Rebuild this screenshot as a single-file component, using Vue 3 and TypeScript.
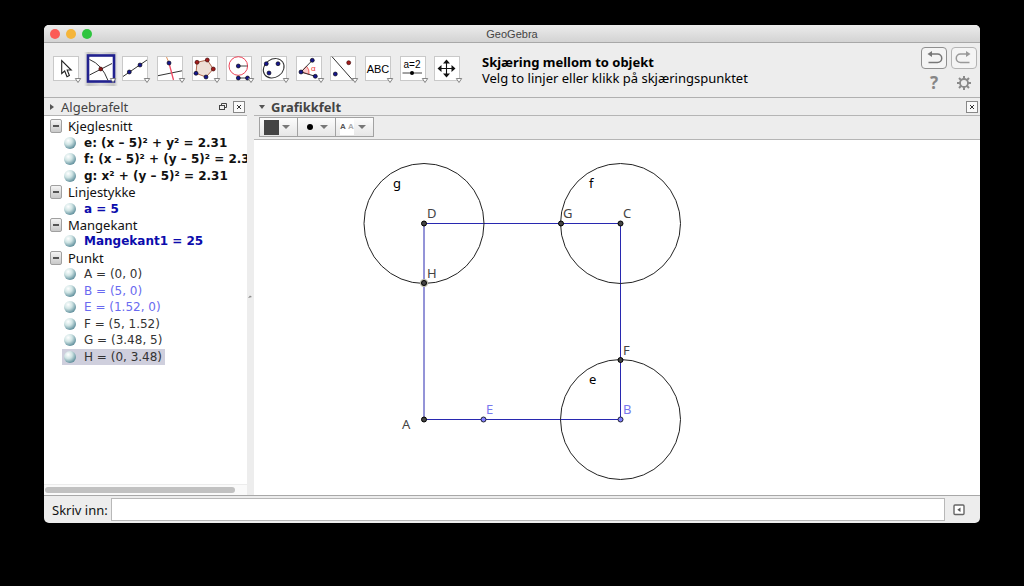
<script setup lang="ts">
import { ref } from 'vue'

type Tone = 'black' | 'blue' | 'soft' | 'dark'
interface Item { text: string; tone: Tone; selected?: boolean }
interface Group { name: string; items: Item[] }
interface Mark { name: string; x: number; y: number; lx: number; ly: number; free?: boolean; selected?: boolean }

const groups: Group[] = [
  {
    name: 'Kjeglesnitt',
    items: [
      { text: 'e: (x – 5)² + y² = 2.31', tone: 'black' },
      { text: 'f: (x – 5)² + (y – 5)² = 2.31', tone: 'black' },
      { text: 'g: x² + (y – 5)² = 2.31', tone: 'black' },
    ],
  },
  { name: 'Linjestykke', items: [{ text: 'a = 5', tone: 'blue' }] },
  { name: 'Mangekant', items: [{ text: 'Mangekant1 = 25', tone: 'blue' }] },
  {
    name: 'Punkt',
    items: [
      { text: 'A = (0, 0)', tone: 'dark' },
      { text: 'B = (5, 0)', tone: 'soft' },
      { text: 'E = (1.52, 0)', tone: 'soft' },
      { text: 'F = (5, 1.52)', tone: 'dark' },
      { text: 'G = (3.48, 5)', tone: 'dark' },
      { text: 'H = (0, 3.48)', tone: 'dark', selected: true },
    ],
  },
]

const tools = ['move', 'intersect', 'line', 'perpendicular', 'polygon', 'circle', 'ellipse', 'angle', 'reflect', 'text', 'slider', 'pan']
const active = ref('intersect')
const command = ref('')

const circles = [
  { name: 'g', x: 170, y: 83.5, lx: 139, ly: 48 },
  { name: 'f', x: 366.5, y: 83.5, lx: 335, ly: 48 },
  { name: 'e', x: 366.5, y: 279.5, lx: 335, ly: 244 },
]

const marks: Mark[] = [
  { name: 'D', x: 170, y: 83.5, lx: 173, ly: 78 },
  { name: 'G', x: 307, y: 83.5, lx: 309, ly: 78 },
  { name: 'C', x: 366.5, y: 83.5, lx: 369, ly: 78 },
  { name: 'H', x: 170, y: 143, lx: 173, ly: 138, selected: true },
  { name: 'F', x: 366.5, y: 220, lx: 369, ly: 215 },
  { name: 'A', x: 170, y: 279.5, lx: 148, ly: 289 },
  { name: 'E', x: 229.5, y: 279.5, lx: 232, ly: 274, free: true },
  { name: 'B', x: 366.5, y: 279.5, lx: 369, ly: 274, free: true },
]
</script>

<template>
  <div class="desktop">
    <main class="window">
      <header class="titlebar">
        <div class="lights">
          <button class="light red" aria-label="Lukk"></button>
          <button class="light yellow" aria-label="Minimer"></button>
          <button class="light green" aria-label="Zoom"></button>
        </div>
        <h1>GeoGebra</h1>
      </header>

      <div class="toolbar">
        <div class="tools">
          <button v-for="t in tools" :key="t" class="tool" :class="{ active: t === active }" :aria-label="t" @click="active = t">
            <svg viewBox="0 0 34 34" width="34" height="34">
              <rect x="4.5" y="4.5" width="25" height="24" fill="#fff" stroke="#c9c9c9" />
              <rect v-if="t === active" x="4" y="3.5" width="26" height="26" fill="#fff" stroke="#21218f" stroke-width="2.6" />
              <path v-if="t === 'move'" d="M12.7 8.5V21.5L15.7 19L18 24.8L20.4 23.6L18.2 18H22.2Z" fill="#fff" stroke="#222" stroke-width="1.1" />
              <g v-else-if="t === 'intersect'" fill="none" stroke="#333">
                <path d="M5.5 7.5Q18 12.500 24 28.500M5.500 23L28 11.500" />
                <circle cx="16.700" cy="17" r="1.900" fill="#8b1a1a" stroke="#300" stroke-width=".6" />
              </g>
              <g v-else-if="t === 'line'" stroke="#333">
                <path d="M5 24.500L29 8" />
                <circle cx="11.300" cy="20" r="2" class="bp" /><circle cx="22" cy="13" r="2" class="bp" />
              </g>
              <g v-else-if="t === 'perpendicular'" stroke="#333">
                <path d="M5 23.700L29 18.800" />
                <path d="M13.500 5L16 11" stroke="#e0925c" /><path d="M16 11L20.500 28" stroke="#f04a63" stroke-width="1.300" />
                <circle cx="16" cy="11" r="2" class="bp" />
              </g>
              <g v-else-if="t === 'polygon'">
                <path d="M9 10.300L19.300 8L25.300 17L18 25L8 21.300Z" fill="#eedfd6" stroke="#b06a50" />
                <g class="rp"><circle cx="9" cy="10.300" r="2" /><circle cx="19.300" cy="8" r="2" /><circle cx="25.300" cy="17" r="2" /></g>
                <g class="bp"><circle cx="18" cy="25" r="2" /><circle cx="8" cy="21.300" r="2" /></g>
              </g>
              <g v-else-if="t === 'circle'">
                <circle cx="16.300" cy="14" r="9.300" fill="none" stroke="#ec4458" />
                <path d="M16.300 14H25.500M16.300 26H25.700" stroke="#444" />
                <g class="bp"><circle cx="16.300" cy="14" r="2" /><circle cx="16.300" cy="26" r="2" /><circle cx="25.500" cy="26" r="2" /></g>
              </g>
              <g v-else-if="t === 'ellipse'">
                <ellipse cx="16.700" cy="16.300" rx="11" ry="9" transform="rotate(-35 16.700 16.300)" fill="none" stroke="#333" />
                <g class="bp"><circle cx="9.300" cy="11.700" r="2" /><circle cx="21" cy="11.700" r="2" /><circle cx="12" cy="21" r="2" /></g>
              </g>
              <g v-else-if="t === 'angle'">
                <path d="M9 20L14.500 14.200Q17.800 17.500 17 22.200Z" fill="#fbc9c9" stroke="#e44" stroke-width=".8" />
                <path d="M20.300 8.300L9 20L23.300 24.300" fill="none" stroke="#333" />
                <g class="bp"><circle cx="9" cy="20" r="2" /><circle cx="20.300" cy="8.300" r="2" /><circle cx="23.300" cy="24.300" r="2" /></g>
                <text x="19" y="19" class="alpha">α</text>
              </g>
              <g v-else-if="t === 'reflect'">
                <path d="M6 4.700L27 28.500" stroke="#333" />
                <circle cx="22.700" cy="10.700" r="2" class="rp" /><circle cx="9.300" cy="22" r="2" class="bp" />
              </g>
              <text v-else-if="t === 'text'" x="17" y="21" class="abc">ABC</text>
              <g v-else-if="t === 'slider'">
                <text x="16" y="16" class="var">a=2</text>
                <path d="M6.500 21H26" stroke="#444" /><circle cx="16" cy="21" r="2" />
              </g>
              <g v-else-if="t === 'pan'">
                <path d="M9 16.500H24M16.500 9V24" stroke="#111" stroke-width="1.100" />
                <path d="M16.500 7.500L20 11.500H13ZM16.500 25.500L20 21.500H13ZM7.500 16.500L11.500 13V20ZM25.500 16.500L21.500 13V20Z" fill="#111" />
              </g>
              <path d="M26.300 26.500H31.700L29 30.500Z" fill="#fff" stroke="#777" stroke-width=".9" />
            </svg>
          </button>
        </div>
        <p class="help"><strong>Skjæring mellom to objekt</strong><span>Velg to linjer eller klikk på skjæringspunktet</span></p>
        <div class="actions">
          <button class="history" aria-label="Angre">
            <svg viewBox="0 0 24 20" width="24" height="20"><path d="M8 6H15.500A4.200 4.200 0 0 1 15.500 14.500H6.500" fill="none" stroke="#777" stroke-width="1.500" /><path d="M5.500 6L10 3V9Z" fill="#777" /></svg>
          </button>
          <button class="history off" aria-label="Gjør om">
            <svg viewBox="0 0 24 20" width="24" height="20"><path d="M16 6H8.500A4.200 4.200 0 0 0 8.500 14.500H17.500" fill="none" stroke="#999" stroke-width="1.500" /><path d="M18.500 6L14 3V9Z" fill="#999" /></svg>
          </button>
          <button class="plain question" aria-label="Hjelp">?</button>
          <button class="plain" aria-label="Innstillinger">
            <svg viewBox="0 0 16 16" width="16" height="16" fill="none" stroke="#8a8a8a">
              <circle cx="8" cy="8" r="4" stroke-width="1.800" />
              <path d="M8 1V4M8 12V15M1 8H4M12 8H15M3 3L5.200 5.200M10.800 10.800L13 13M3 13L5.200 10.800M10.800 5.200L13 3" stroke-width="2" />
            </svg>
          </button>
        </div>
      </div>

      <div class="panes">
        <section class="algebra">
          <div class="dock">
            <svg viewBox="0 0 8 8" width="8" height="8"><path d="M2 1L6 4L2 7Z" fill="#555" /></svg>
            <h2>Algebrafelt</h2>
            <button class="detach" aria-label="Løsne">
              <svg viewBox="0 0 10 10" width="10" height="10" fill="none" stroke="#444"><path d="M3.500 3V1.500H8.500V5.500H7" /><rect x="1.500" y="3.500" width="5" height="4" /></svg>
            </button>
            <button class="close" aria-label="Lukk algebrafelt"><svg viewBox="0 0 10 10" width="10" height="10"><path d="M3 3L7 7M7 3L3 7" stroke="#333" /></svg></button>
          </div>
          <div class="tree">
            <template v-for="g in groups" :key="g.name">
              <div class="group"><button class="toggle" :aria-label="'Skjul ' + g.name"></button><span>{{ g.name }}</span></div>
              <div v-for="i in g.items" :key="i.text" class="item" :class="[i.tone, { selected: i.selected }]">
                <button class="ball" :aria-label="'Vis ' + i.text"></button><span>{{ i.text }}</span>
              </div>
            </template>
          </div>
          <div class="scroll"><div class="thumb"></div></div>
        </section>

        <div class="divider"><svg viewBox="0 0 6 6" width="6" height="6"><path d="M1 4L3 1.500L5 3Z" fill="#888" /></svg></div>

        <section class="graphics">
          <div class="dock strong">
            <svg viewBox="0 0 8 8" width="8" height="8"><path d="M1 2H7L4 6Z" fill="#555" /></svg>
            <h2>Grafikkfelt</h2>
            <button class="close" aria-label="Lukk grafikkfelt"><svg viewBox="0 0 10 10" width="10" height="10"><path d="M3 3L7 7M7 3L3 7" stroke="#333" /></svg></button>
          </div>
          <div class="stylebar">
            <button aria-label="Farge"><i class="swatch"></i><i class="caret"></i></button>
            <button aria-label="Punktstil"><i class="dot"></i><i class="caret"></i></button>
            <button aria-label="Tekststil" class="letters"><span><b>A</b> <em>A</em></span><i class="caret"></i></button>
          </div>
          <svg class="canvas">
            <path d="M170 279.500V83.500H366.500V279.500Z" fill="none" stroke="#2828b0" />
            <g v-for="c in circles" :key="c.name">
              <circle :cx="c.x" :cy="c.y" r="60" fill="none" stroke="#222" />
              <text :x="c.lx" :y="c.ly" class="curve">{{ c.name }}</text>
            </g>
            <g v-for="m in marks" :key="m.name" :class="{ free: m.free }">
              <circle v-if="m.selected" :cx="m.x" :cy="m.y" r="4" fill="#b9b9a8" />
              <circle :cx="m.x" :cy="m.y" r="2.500" class="mark" />
              <text :x="m.lx" :y="m.ly" class="label">{{ m.name }}</text>
            </g>
          </svg>
        </section>
      </div>

      <footer class="inputbar">
        <label for="command">Skriv inn:</label>
        <input id="command" v-model="command" type="text" />
        <button class="plain" aria-label="Inntastingshjelp">
          <svg viewBox="0 0 12 12" width="12" height="12"><rect x="1" y="1" width="10" height="9.500" rx="1" fill="#fff" stroke="#666" stroke-width="1.400" /><path d="M7.500 3.500V8L4.300 5.700Z" fill="#555" /></svg>
        </button>
      </footer>
    </main>
  </div>
</template>

<style>
html, body { background: #000; }
body { margin: 0; }
</style>

<style scoped>
.desktop {
  box-sizing: border-box;
  min-height: 100vh;
  padding: 25px 44px 63px;
  display: flex;
  background: #000;
  color: #111;
  font: 13px/16px "Noto Sans", sans-serif;
}
h1, h2, p { margin: 0; font-weight: normal; }
button { margin: 0; padding: 0; border: 0; background: none; font: inherit; color: inherit; }
svg { display: block; }
.window { flex: 1; min-width: 0; display: flex; flex-direction: column; border-radius: 5px; overflow: hidden; background: #ededed; }
.titlebar { height: 17px; display: grid; grid-template-columns: 1fr auto 1fr; align-items: center; background: linear-gradient(#ececec, #d3d3d3); border-bottom: 1px solid #a8a8a8; }
.titlebar h1 { font: 11px/16px "Liberation Sans", Arial, sans-serif; color: #444; }
.lights { display: flex; gap: 6px; padding-left: 6px; }
.light { width: 10px; height: 10px; border-radius: 50%; }
.red { background: #fc5b57; }
.yellow { background: #f5b53a; }
.green { background: #2fc53f; }

.toolbar { height: 54px; display: flex; align-items: center; border-bottom: 1px solid #b0b0b0; }
.tools { width: 416px; margin: 0 0 2px 5px; display: grid; grid-template-columns: repeat(12, 1fr); flex: none; }
.tool.active { background: linear-gradient(90deg, #ededed, #c4c4c4 12%, #dcdcdc 50%, #c4c4c4 88%, #ededed); }
.bp { fill: #16168c; stroke: #000; stroke-width: .6px; }
.rp { fill: #a01c1c; stroke: #300; stroke-width: .6px; }
.abc, .var { font: 11px "Liberation Sans", Arial, sans-serif; text-anchor: middle; }
.var { font-size: 10px; }
.alpha { font: 8px "Liberation Sans", Arial, sans-serif; fill: #e33; }
.help { flex: 1; margin-left: 17px; display: flex; flex-direction: column; white-space: nowrap; color: #000; }
.actions { display: grid; grid-template-columns: 26px 26px; grid-template-rows: 22px 20px; gap: 4px; padding: 0 3px 0 0; justify-items: center; align-items: center; }
.history { box-sizing: border-box; width: 26px; height: 22px; border: 1px solid #8f8f8f; border-radius: 4px; background: #f4f4f4; }
.history.off { border-color: #b4b4b4; }
.question { font: bold 17px/20px "Noto Sans", sans-serif; color: #868686; }

.panes { flex: 1; display: grid; grid-template-columns: 203px 7px 1fr; min-height: 0; }
.algebra, .graphics { display: flex; flex-direction: column; min-width: 0; background: #fff; }
.dock { height: 17px; display: flex; align-items: center; gap: 5px; padding: 0 2px 0 4px; background: #ededed; border-bottom: 1px solid #b5b5b5; }
.dock h2 { flex: 1; font: 13px/16px "Noto Sans", sans-serif; color: #444; }
.dock.strong h2 { font-weight: bold; }
.close { box-sizing: border-box; width: 12px; height: 12px; border: 1px solid #888; background: #fafafa; }
.tree { flex: none; height: 247px; padding-top: 2px; display: grid; grid-auto-rows: 1fr; overflow: hidden; white-space: nowrap; }
.group, .item { display: flex; align-items: center; }
.group { gap: 6px; padding-left: 6px; }
.item { justify-self: start; gap: 8px; margin-left: 18px; padding: 0 3px 0 2px; font: 12px/16px "DejaVu Sans", sans-serif; }
.black, .blue { font-weight: bold; }
.black { color: #111; }
.blue { color: #0c0cac; }
.soft { color: #6a6af0; }
.dark { color: #333; }
.selected { background: #cfcfdd; }
.toggle { flex: none; box-sizing: border-box; width: 12px; height: 14px; border: 1px solid #a0a0a0; border-radius: 2px; background: linear-gradient(#f4f4f4, #c9c9c9); }
.toggle::after { content: ""; display: block; width: 6px; height: 2px; margin: auto; background: #555; }
.ball { flex: none; width: 12px; height: 12px; border-radius: 50%; background: radial-gradient(circle at 35% 30%, #fff 0, #cfe4e4 35%, #6f9ba6 70%, #3c6a78 100%); }
.scroll { margin-top: auto; height: 8px; padding: 2px 12px 0 1px; border-top: 1px solid #ececec; background: #fafafa; }
.thumb { height: 6px; border-radius: 3px; background: #c1c1c1; }
.divider { display: grid; align-items: center; background: #ededed; }

.stylebar { display: flex; height: 24px; box-sizing: border-box; padding: 1px 4px 2px 5px; background: #ededed; border-bottom: 1px solid #b5b5b5; }
.stylebar button { box-sizing: border-box; width: 39px; margin-right: -1px; border: 1px solid #a2a2a2; display: flex; align-items: center; justify-content: space-between; padding: 0 7px 0 4px; background: linear-gradient(#fcfcfc, #e6e6e6); }
.swatch { width: 15px; height: 15px; background: #444; }
.dot { width: 6px; height: 6px; margin-left: 5px; border-radius: 50%; background: #000; }
.caret { border: 4px solid transparent; border-top: 4px solid #777; border-bottom: 0; }
.letters span { font: 8px/16px "Liberation Sans", Arial, sans-serif; background: #fff; color: #555; white-space: nowrap; }
.letters em { font-style: normal; font-weight: bold; color: #aaa; }
.canvas { flex: 1; width: 100%; min-height: 0; background: #fff; }
.canvas text { font: 13px "Noto Sans", sans-serif; }
.canvas .curve { fill: #000; }
.canvas .label { fill: #444; }
.mark { fill: #444; stroke: #000; }
.free .mark { fill: #8080ff; stroke: #223; }
.canvas .free .label { fill: #7878ee; }

.inputbar { height: 27px; display: flex; align-items: center; border-top: 1px solid #a8a8a8; padding-left: 8px; }
.inputbar input { flex: 1; box-sizing: border-box; height: 23px; margin: 0 8px 0 3px; border: 1px solid #b8b8b8; background: #fff; padding: 0 4px; font: inherit; }
.inputbar .plain { margin-right: 15px; }
</style>
